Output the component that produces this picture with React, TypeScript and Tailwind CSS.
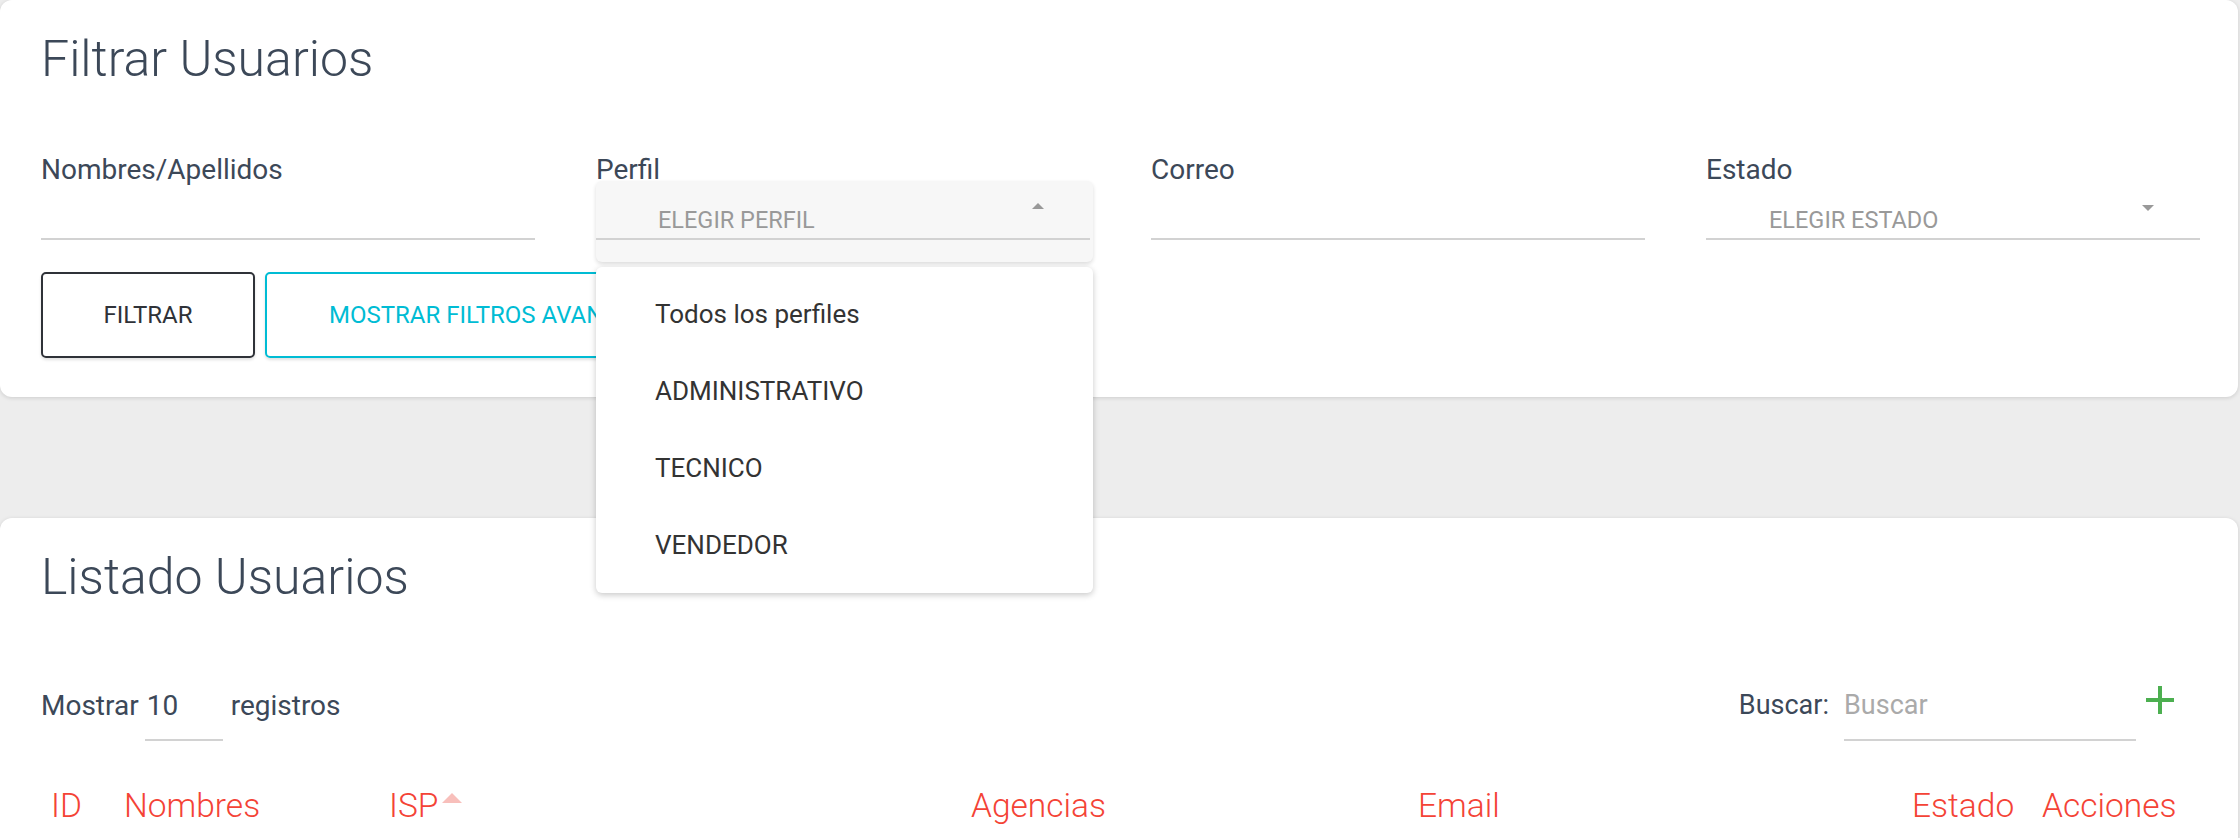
import React from 'react';

const perfiles = ['Todos los perfiles', 'ADMINISTRATIVO', 'TECNICO', 'VENDEDOR'];

const columnas = [
    { label: 'ID' },
    { label: 'Nombres' },
    { label: 'ISP', sorted: true },
    { label: 'Agencias' },
    { label: 'Email' },
    { label: 'Estado' },
    { label: 'Acciones' },
];

const Label: React.FC<{ children: React.ReactNode }> = ({ children }) => (
    <label className="block text-[28px] leading-[28px] text-[#3c4858]">{children}</label>
);

const Caret: React.FC<{ up?: boolean }> = ({ up }) => (
    <span
        className={`inline-block w-0 h-0 border-l-[6px] border-r-[6px] border-l-transparent border-r-transparent ${up ? 'border-b-[6px] border-b-[#999]' : 'border-t-[6px] border-t-[#999]'}`}
    />
);

export default function App() {
    return (
        <div className="w-[2240px] h-[838px] overflow-hidden bg-[#ededed] font-['Roboto',sans-serif]">
            {/* Filtros */}
            <div className="w-[2238px] bg-white rounded-[12px] shadow-[0_1px_4px_rgba(0,0,0,0.14)] pl-[41px] pr-[38px] pt-[34px] pb-[39px]">
                <h4 className="text-[50px] leading-[50px] font-light text-[#3c4858]">Filtrar Usuarios</h4>

                <div className="grid grid-cols-4 gap-x-[61px] mt-[72px]">
                    <div>
                        <Label>Nombres/Apellidos</Label>
                        <div className="h-[56px] border-b-2 border-[#d2d2d2]" />
                    </div>

                    <div>
                        <Label>Perfil</Label>
                        <div className="relative h-[56px]">
                            <div className="absolute z-10 left-0 -right-[3px] -top-[3px] h-[81px] bg-[#f7f7f7] rounded-[6px] shadow-[0_2px_4px_rgba(0,0,0,0.14)]">
                                <div className="mr-[3px] h-[59px] border-b-2 border-[#d2d2d2] flex items-end justify-between pl-[62px] pr-[46px] pb-[7px]">
                                    <span className="text-[23.5px] leading-[22px] text-[#999]">ELEGIR PERFIL</span>
                                    <span className="self-center mt-[-4px]"><Caret up /></span>
                                </div>
                            </div>
                            <ul className="absolute z-20 left-0 -right-[3px] top-[83px] bg-white rounded-[6px] shadow-[0_2px_6px_rgba(0,0,0,0.22)] py-[9px]">
                                {perfiles.map((p) => (
                                    <li key={p} className="h-[77px] flex items-center pl-[59px] text-[26px] text-[#333]">
                                        {p}
                                    </li>
                                ))}
                            </ul>
                        </div>
                    </div>

                    <div>
                        <Label>Correo</Label>
                        <div className="h-[56px] border-b-2 border-[#d2d2d2]" />
                    </div>

                    <div>
                        <Label>Estado</Label>
                        <div className="h-[56px] border-b-2 border-[#d2d2d2] flex items-end justify-between pl-[63px] pr-[46px] pb-[7px]">
                            <span className="text-[23.5px] leading-[22px] text-[#999]">ELEGIR ESTADO</span>
                            <span className="self-center mt-[-4px]"><Caret /></span>
                        </div>
                    </div>
                </div>

                <div className="flex gap-[10px] mt-[32px]">
                    <button className="w-[214px] h-[86px] border-2 border-[#2f3238] rounded-[5px] text-[24px] text-[#2f3238] shadow-[0_2px_3px_rgba(0,0,0,0.12)]">
                        FILTRAR
                    </button>
                    <button className="h-[86px] px-[62px] border-2 border-[#00bcd4] rounded-[5px] text-[24px] text-[#00bcd4] shadow-[0_2px_3px_rgba(0,0,0,0.12)]">
                        MOSTRAR FILTROS AVANZADOS
                    </button>
                </div>
            </div>

            {/* Listado */}
            <div className="w-[2238px] mt-[121px] bg-white rounded-t-[12px] shadow-[0_1px_4px_rgba(0,0,0,0.14)] pl-[41px] pr-[38px] pt-[34px] pb-[40px]">
                <h4 className="text-[50px] leading-[50px] font-light text-[#3c4858]">Listado Usuarios</h4>

                <div className="flex justify-between mt-[83px] h-[56px]">
                    <div className="flex items-baseline text-[28px] leading-[27px] text-[#3c4858]">
                        <span>Mostrar</span>
                        <div className="ml-[6px] w-[78px] h-[56px] pt-[7px] pl-[2px] border-b-2 border-[#d2d2d2]">10</div>
                        <span className="ml-[8px]">registros</span>
                    </div>
                    <div className="flex items-baseline text-[27px] leading-[27px]">
                        <span className="text-[#3c4858]">Buscar:</span>
                        <div className="ml-[15px] w-[292px] h-[56px] pt-[7px] border-b-2 border-[#d2d2d2] text-[#aaa]">Buscar</div>
                        <svg className="self-start ml-[10px] mr-[26px] mt-[1px]" width="28" height="28" viewBox="0 0 28 28">
                            <path d="M14 0v28M0 14h28" stroke="#4caf50" strokeWidth="4" />
                        </svg>
                    </div>
                </div>

                <div className="grid grid-cols-[73px_265px_582px_447px_494px_130px_1fr] mt-[48px] text-[33.5px] leading-[33px] font-light text-[#f44336]">
                    {columnas.map((c) => (
                        <div key={c.label} className="px-[10px] whitespace-nowrap">
                            {c.label}
                            {c.sorted && (
                                <span className="inline-block align-top mt-[4px] ml-[4px] w-0 h-0 border-l-[10px] border-r-[10px] border-b-[10px] border-l-transparent border-r-transparent border-b-[#f8bfbb]" />
                            )}
                        </div>
                    ))}
                </div>
            </div>
        </div>
    );
}
